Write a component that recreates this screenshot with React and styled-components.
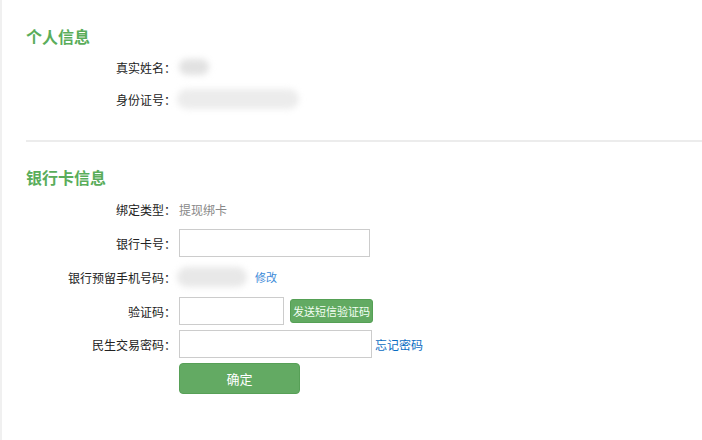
import React from "react"
import styled, { createGlobalStyle } from "styled-components"

const GlobalStyle = createGlobalStyle`
  html, body {
    margin: 0;
    padding: 0;
    background: #fff;
  }
  body {
    font-family: "Microsoft YaHei", "Noto Sans CJK SC", "Noto Sans", sans-serif;
    font-size: 12px;
    color: #222;
  }
`

const Page = styled.div`
  width: 702px;
  height: 440px;
  box-sizing: border-box;
  border-left: 2px solid #f0f0f0;
  overflow: hidden;
`

const Section = styled.div`
  padding: ${(p) => p.$pt}px 0 0 24px;
`

const Title = styled.h2`
  margin: 0 0 5px;
  height: 20px;
  line-height: 20px;
  font-size: 16px;
  font-weight: bold;
  color: #5aad5a;
`

const Divider = styled.div`
  margin: 25px 0 0 24px;
  height: 2px;
  background: #ececec;
`

const Rows = styled.div`
  display: flex;
  flex-direction: column;
  gap: 4px;
`

const Row = styled.div`
  display: flex;
  align-items: center;
  height: ${(p) => p.$h || 32}px;
  margin-top: ${(p) => p.$mt || 0}px;
`

const Label = styled.label`
  width: 150px;
  flex: 0 0 150px;
  margin-right: 3px;
  text-align: right;
  color: #222;
  white-space: nowrap;
`

const Value = styled.div`
  margin-left: ${(p) => p.$ml ?? 0}px;
  display: flex;
  align-items: center;
  color: #888;
`

const Blur = styled.span`
  display: inline-block;
  width: ${(p) => p.$w}px;
  height: ${(p) => p.$h}px;
  background: ${(p) => p.$bg || "#e6e6e6"};
  border-radius: ${(p) => p.$h / 2}px;
  filter: blur(3px);
`

const Input = styled.input`
  box-sizing: border-box;
  width: ${(p) => p.$w}px;
  height: 28px;
  border: 1px solid #cccccc;
  padding: 0 6px;
  font: inherit;
  outline: none;
`

const SmsButton = styled.button`
  margin-left: 6px;
  height: 24px;
  padding: 0 2px;
  border: 1px solid #55a055;
  border-radius: 3px;
  background: #62aa62;
  color: #f4fff4;
  font-family: inherit;
  font-size: 11px;
  cursor: pointer;
`

const SmallLink = styled.a`
  color: ${(p) => p.$color};
  font-size: ${(p) => p.$size}px;
  margin-left: ${(p) => p.$ml}px;
  text-decoration: none;
  cursor: pointer;
`

const SubmitButton = styled.button`
  width: 121px;
  height: 31px;
  border: 1px solid #57a057;
  border-radius: 4px;
  background: #63aa63;
  color: #fff;
  font-family: inherit;
  font-size: 13px;
  cursor: pointer;
`

export default function App() {
  return (
    <Page>
      <GlobalStyle />
      <Section $pt={26}>
        <Title>个人信息</Title>
        <Rows>
          <Row>
            <Label>真实姓名：</Label>
            <Value $ml={0}>
              <Blur $w={30} $h={16} $bg="#e2e2e2" />
            </Value>
          </Row>
          <Row $mt={-4}>
            <Label>身份证号：</Label>
            <Value $ml={-2}>
              <Blur $w={122} $h={20} $bg="#ececec" />
            </Value>
          </Row>
        </Rows>
      </Section>
      <Divider />
      <Section $pt={25}>
        <Title>银行卡信息</Title>
        <Rows>
          <Row $mt={1}>
            <Label>绑定类型：</Label>
            <Value>提现绑卡</Value>
          </Row>
          <Row $h={28}>
            <Label>银行卡号：</Label>
            <Input $w={191} />
          </Row>
          <Row>
            <Label>银行预留手机号码：</Label>
            <Value $ml={-2}>
              <Blur $w={70} $h={20} $bg="#e8e8e8" />
              <SmallLink $color="#3b8ad8" $size={11} $ml={8}>修改</SmallLink>
            </Value>
          </Row>
          <Row $h={28}>
            <Label>验证码：</Label>
            <Input $w={105} />
            <SmsButton>发送短信验证码</SmsButton>
          </Row>
          <Row $h={28} $mt={1}>
            <Label>民生交易密码：</Label>
            <Input $w={193} />
            <SmallLink $color="#0b6cc2" $size={12} $ml={3}>忘记密码</SmallLink>
          </Row>
          <Row $h={31} $mt={1}>
            <Label />
            <SubmitButton>确定</SubmitButton>
          </Row>
        </Rows>
      </Section>
    </Page>
  )
}
